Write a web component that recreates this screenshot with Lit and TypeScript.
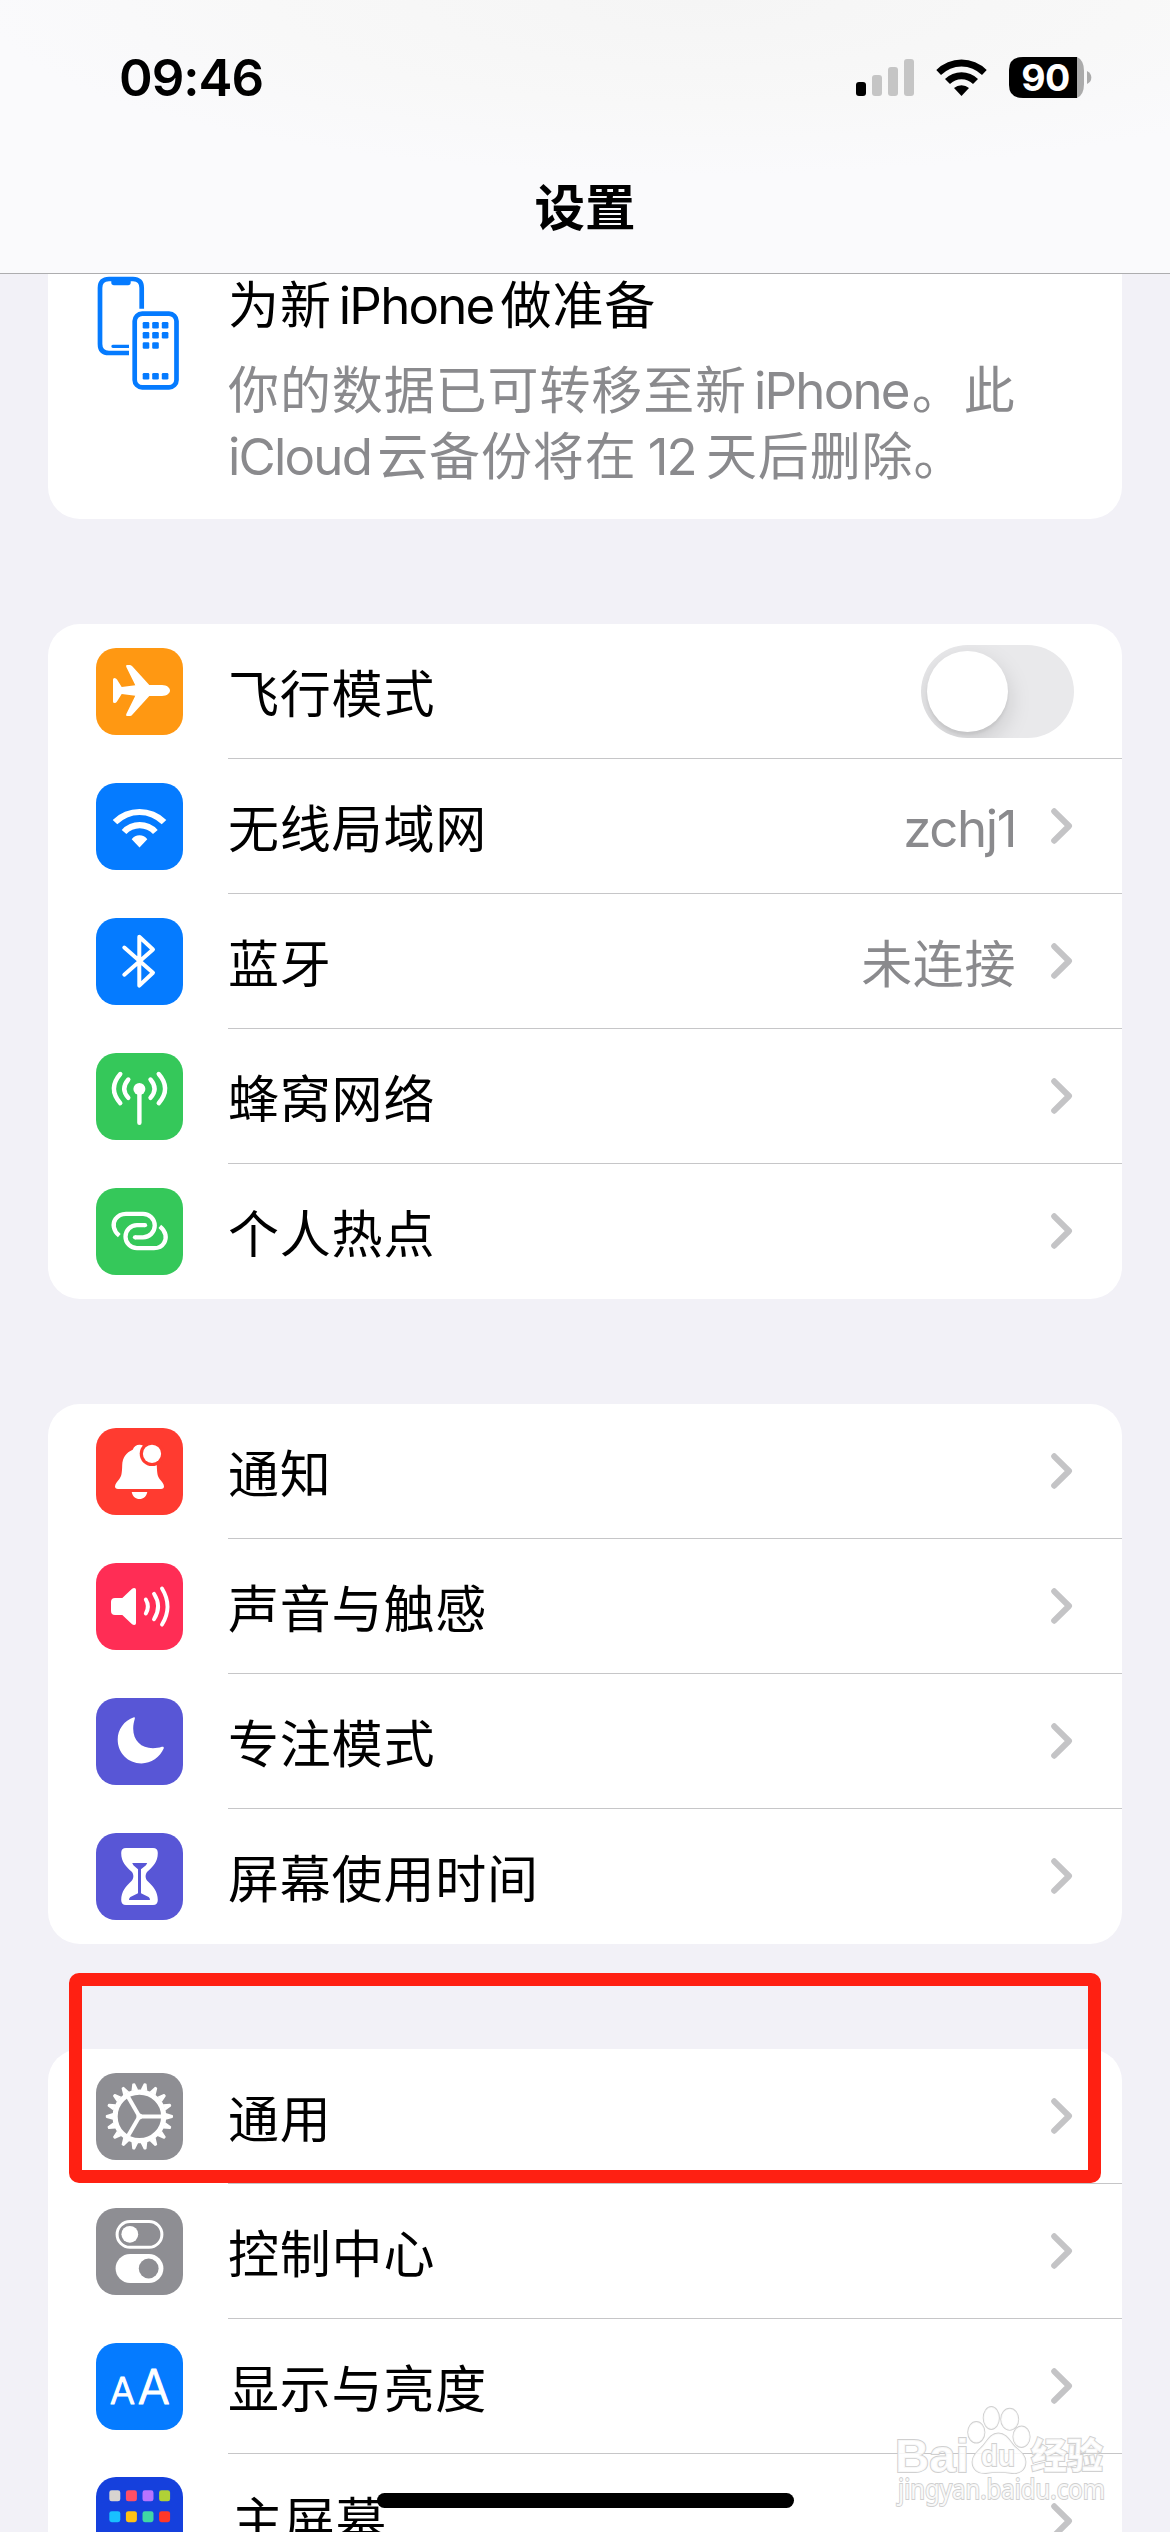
import { LitElement, html, css, svg, nothing } from "lit";
import { customElement, property } from "lit/decorators.js";

const gearTeeth = Array.from({ length: 18 }, (_, i) => i * 20);
const homeTiles = [
  ["#d8d4d0", "#ff4f66", "#b873ff", "#b0d136"],
  ["#18c0ff", "#ffc114", "#3fd8a4", "#ff3728"],
];

const glyphs: Record<string, unknown> = {
  airplane: svg`<path fill="#fff" d="M53.3 37H66C71 37 74 40 74 42.5C74 45 71 48 66 48H53.3L36.5 66.5Q35.3 68 34 68H31Q29.5 68 30.3 66L39.3 47.7L25.7 46L21 53.5Q20 55 18.5 55Q17 55 17 53.5V31.5Q17 30 18.5 30Q20 30 21 31.5L25.7 39L39.3 37.3L30.3 19Q29.5 17 31 17H34Q35.3 17 36.5 18.5Z"/>`,
  wifi: svg`<path fill="#fff" d="M16.7 37A38 38 0 0 1 70.3 37L65.7 41.3A31.1 31.1 0 0 0 21.3 41.3ZM25.7 47A24.3 24.3 0 0 1 61.7 47L57 51A18 18 0 0 0 30.4 51ZM35.7 56.3A9.6 9.6 0 0 1 51.3 56.3L43.5 64.4Z"/>`,
  bluetooth: svg`<path class="line" stroke-width="4" d="M28.3 29.5L57 54.7L43.3 67.6V18.8L57 31.5L28.3 56.7"/>`,
  cellular: svg`<circle cx="43.4" cy="36" r="6" fill="#fff"/><path class="line" stroke-width="4.4" d="M43.4 36V69.8M32.3 26.5Q24.2 36 32.3 44.8M54.5 26.5Q62.6 36 54.5 44.8M24.3 21Q11.5 35.5 24.3 50.2M62.7 21Q75.5 35.5 62.7 50.2"/>`,
  hotspot: svg`<path class="line butt" stroke-width="4.3" d="M23.3 47.7C17 42.5 16.3 35.5 19.5 31C22 27.5 26 25.8 30 25.8H47A11.75 11.75 0 0 1 47 49.3H39"/><path class="line butt" stroke-width="4.3" d="M49 37.2H41A11.5 11.5 0 0 0 41 60.2H58C62 60.2 66 58.4 68 55C71 50.2 70.3 43.5 63.8 38.4"/><circle cx="39" cy="49.3" r="2.15" fill="#fff"/><circle cx="49" cy="37.2" r="2.15" fill="#fff"/>`,
  bell: svg`<path fill="#fff" d="M36.7 21.7C38 18.5 40.5 16.8 43.5 16.8C46.5 16.8 49 18.5 50.3 21.7C57 24.5 60.5 30 60.8 37C61 45 61.5 48.5 64 51.5C66 54 68 56 68 58.5C68 60 67 61 65 61H22C20 61 19 60 19 58.5C19 56 21 54 23 51.5C25.5 48.5 26 45 26.2 37C26.5 30 30 24.5 36.7 21.7ZM35.7 64H51.3C50.5 68.5 47.3 71 43.5 71S36.5 68.5 35.7 64Z"/><circle cx="56" cy="25.8" r="12.3" fill="#ff3b30"/><circle cx="56" cy="25.8" r="9.1" fill="#fff"/>`,
  speaker: svg`<path fill="#fff" d="M19 35H26.3L35.8 26Q37 25 38.3 25Q40 25 40 26.8V60.2Q40 62 38.3 62Q37 62 35.8 61L26.3 52H19Q15 52 15 48V39Q15 35 19 35Z"/><path class="line" stroke-width="3.9" d="M49.8 36.5Q54 43.5 49.8 50.5M58 30.8Q66.2 43.5 58 56.3M66 25.5Q77 43.5 66 61.6"/>`,
  moon: svg`<path fill="#fff" d="M38 19.2C28 22.5 21.7 31.5 21.7 41.5C21.7 55 32 65.4 45.5 65.4C55 65.4 64 59 67.7 50.5C68.2 49 67.2 48.4 65.8 48.8C63 49.8 60 50.2 57 50.2C45 50.2 37.2 42.5 37.2 30.5C37.2 27 38 23.5 38.8 20.8Q39.3 18.8 38 19.2Z"/>`,
  hourglass: svg`<path fill="#fff" d="M30 15H57Q61.8 15 61.8 20C61.8 29 57 33.5 51.5 38.5C49 41 49 45.5 51.5 48C57 53 61.8 58.5 61.8 67Q61.8 72 57 72H30Q25.2 72 25.2 67C25.2 58.5 30 53 35.5 48C38 45.5 38 41 35.5 38.5C30 33.5 25.2 29 25.2 20Q25.2 15 30 15Z"/><path fill="#5856d6" d="M36.2 30H51.2L50 32.2Q47 34.5 45 36.3V60.2L52.6 64Q54 64.8 54 67H33Q33 64.8 34.4 64L42 60.2V36.3Q40 34.5 37.4 32.2Z"/>`,
  gear: svg`${gearTeeth.map(a => svg`<path fill="#fff" transform="rotate(${a + 90} 43.4 43.4)" d="M40 17L41.9 10.5Q42.1 9.8 42.8 9.8H44Q44.7 9.8 44.9 10.5L46.8 17Z"/>`)}<circle cx="43.4" cy="43.4" r="24.3" fill="none" stroke="#fff" stroke-width="5.2"/>${[0, 120, 240].map(a => svg`<path stroke="#fff" stroke-width="4" transform="rotate(${a} 43.4 43.4)" d="M43.4 43.4H67"/>`)}<circle cx="43.4" cy="43.4" r="3" fill="#fff"/>`,
  toggles: svg`<rect x="21.1" y="13.5" width="44.8" height="25.8" rx="12.9" fill="none" stroke="#fff" stroke-width="3"/><circle cx="33.8" cy="26.3" r="8.4" fill="#fff"/><rect x="19.6" y="46" width="47.8" height="28.9" rx="14.45" fill="#fff"/><circle cx="52.7" cy="60.5" r="9.9" fill="#8e8e93"/>`,
  letters: svg`<text class="glyph" x="14" y="61" font-size="37">A</text><text class="glyph" x="41.8" y="61" font-size="47.5">A</text>`,
  home: svg`${homeTiles.map((row, r) => row.map((c, i) => svg`<rect x="${13.3 + i * 16.6}" y="${13.3 + r * 20.9}" width="11" height="11" rx="2.4" fill="${c}"/>`))}`,
};

@customElement("settings-row")
class SettingsRow extends LitElement {
  @property() icon = "";
  @property() color = "";
  @property() label = "";
  @property() value = "";
  @property({ type: Boolean }) toggle = false;
  @property({ type: Boolean }) last = false;

  static styles = css`
    :host { display: block; height: 135px; }
    .row { display: flex; height: 135px; padding-left: 48px; }
    .icon { width: 87px; height: 87px; margin: 24px 45px 0 0; border-radius: 20px; flex: none; overflow: hidden; }
    .icon.home { margin-top: 23px; }
    .icon svg { display: block; width: 87px; height: 87px; }
    .line { fill: none; stroke: #fff; stroke-linecap: round; stroke-linejoin: round; }
    .butt { stroke-linecap: butt; }
    .glyph { font-family: Inter, "Liberation Sans", sans-serif; font-weight: 300; fill: #fff; stroke: #fff; stroke-width: 1.2; stroke-linejoin: round; }
    .body { flex: 1; display: flex; align-items: center; border-bottom: 1px solid #c6c6c8; padding-right: 48px; box-sizing: border-box; height: 135px; }
    .body.last { border-bottom-color: transparent; }
    .label, .value { line-height: 74px; font-size: 51px; letter-spacing: 0.8px; white-space: nowrap; padding-top: 7px; }
    .label { flex: 1; color: #000; }
    .label.home { padding: 2px 0 0 4px; }
    .value { color: #8a8a8d; letter-spacing: 0.6px; }
    .value.latin { letter-spacing: -1.4px; padding-top: 6px; }
    .chevron { width: 24px; height: 40px; margin-left: 34px; display: block; }
    .switch { width: 153px; height: 93px; border-radius: 47px; background: #e9e9eb; box-sizing: border-box; padding: 6px; overflow: hidden; }
    .knob { width: 81px; height: 81px; border-radius: 50%; background: #fff; box-shadow: 0 9px 24px rgba(0,0,0,.15), 0 3px 3px rgba(0,0,0,.06); }
  `;

  render() {
    const home = this.icon === "home" ? "home" : "";
    const latin = /^[\x20-\x7e]+$/.test(this.value) ? "latin" : "";
    return html`<div class="row">
      <div class="icon ${home}" style="background:${this.color}"><svg viewBox="0 0 87 87">${glyphs[this.icon]}</svg></div>
      <div class="body ${this.last ? "last" : ""}">
        <span class="label ${home}">${this.label}</span>
        ${this.value ? html`<span class="value ${latin}">${this.value}</span>` : nothing}
        ${this.toggle
          ? html`<div class="switch"><div class="knob"></div></div>`
          : html`<svg class="chevron" viewBox="0 0 24 40"><path d="M4.2 5.3L19 20L4.2 34.7" fill="none" stroke="#c4c4c6" stroke-width="6" stroke-linecap="round" stroke-linejoin="round"/></svg>`}
      </div>
    </div>`;
  }
}

interface Item { icon: string; color: string; label: string; value?: string; toggle?: boolean; }

const groups: Item[][] = [
  [
    { icon: "airplane", color: "#ff9812", label: "飞行模式", toggle: true },
    { icon: "wifi", color: "#057bff", label: "无线局域网", value: "zchj1" },
    { icon: "bluetooth", color: "#057bff", label: "蓝牙", value: "未连接" },
    { icon: "cellular", color: "#35c85a", label: "蜂窝网络" },
    { icon: "hotspot", color: "#35c85a", label: "个人热点" },
  ],
  [
    { icon: "bell", color: "#ff3b30", label: "通知" },
    { icon: "speaker", color: "#ff2d55", label: "声音与触感" },
    { icon: "moon", color: "#5856d6", label: "专注模式" },
    { icon: "hourglass", color: "#5856d6", label: "屏幕使用时间" },
  ],
  [
    { icon: "gear", color: "#8e8e93", label: "通用" },
    { icon: "toggles", color: "#8e8e93", label: "控制中心" },
    { icon: "letters", color: "#057bff", label: "显示与亮度" },
    { icon: "home", color: "#1540dd", label: "主屏幕" },
  ],
];

const dots = [[46.7, 47], [56.2, 47], [65.8, 47], [46.7, 57], [56.2, 57], [65.8, 57], [46.7, 67.2], [56.2, 67.2], [46.7, 98], [56.2, 98], [65.8, 98]];

@customElement("app-root")
class AppRoot extends LitElement {
  static styles = css`
    :host { display: block; width: 1170px; height: 2532px; overflow: hidden; position: relative; background: #f2f1f7; font-family: Inter, "Noto Sans CJK SC", sans-serif; }
    .page { display: flex; flex-direction: column; }
    .header { height: 274px; flex: none; box-sizing: border-box; border-bottom: 1px solid #adadaf; background: radial-gradient(ellipse 720px 175px at 700px 0, #f5f5f5, #f8f8f8 60%, rgba(250,250,252,0)), #fafafc; display: flex; flex-direction: column; }
    .status { height: 154px; display: flex; align-items: center; padding: 0 76px 0 119px; box-sizing: border-box; }
    .time { flex: 1; font-size: 51px; font-weight: 600; line-height: 60px; letter-spacing: -1px; padding-top: 1px; }
    .status-icons { width: 240px; height: 44px; display: block; }
    .battery { font-family: Inter, sans-serif; font-weight: 700; font-size: 37.5px; letter-spacing: -0.6px; fill: #fff; }
    .title { text-align: center; font-size: 50.5px; font-weight: 600; line-height: 72px; margin-top: 18px; color: #000; }
    .notice { background: #fff; margin: 0 48px; height: 245px; border-radius: 0 0 32px 32px; padding-left: 48px; display: flex; box-sizing: border-box; }
    .phones { width: 87px; height: 118px; margin: 1px 45px 0 0; flex: none; }
    .notice-text { font-size: 51px; line-height: 66px; letter-spacing: 0.9px; white-space: nowrap; color: #8a8a8d; }
    .notice-title { color: #000; line-height: 72px; margin: -4px 0 16px; }
    .latin { margin: 0 3px 0 7px; letter-spacing: -1.8px; }
    .notice-title .latin { margin-right: 7px; }
    .first { margin: 0 6px 0 0; }
    .digits { margin: 0 10px 0 11px; }
    .card { background: #fff; border-radius: 32px; margin: 105px 48px 0; }
    .marker { position: absolute; left: 69px; top: 1973px; width: 1032px; height: 210px; box-sizing: border-box; border: 13px solid #ff2012; border-radius: 10px; }
    .watermark { position: absolute; left: 890px; top: 2400px; width: 230px; height: 112px; fill: rgba(255,255,255,.85); stroke: #d0d0d0; stroke-width: 1.8; paint-order: stroke; }
    .wm-logo { font: 700 46px "Liberation Sans", sans-serif; }
    .wm-du { font: 700 30px "Liberation Sans", sans-serif; }
    .wm-cjk { font: 900 36px "Noto Sans CJK SC", sans-serif; }
    .wm-url { font: 400 26.5px "Noto Sans", sans-serif; }
    .indicator { position: absolute; left: 377px; top: 2493px; width: 417px; height: 15px; border-radius: 8px; background: #000; }
  `;

  render() {
    return html`
      <div class="page">
        <div class="header">
          <div class="status">
            <span class="time">09:46</span>
            <svg class="status-icons" viewBox="854 55 240 44">
              <rect x="856" y="82" width="10" height="14" rx="3"/>
              <g fill="#c5c5c5"><rect x="872" y="75" width="10" height="21" rx="3"/><rect x="888" y="67" width="10" height="29" rx="3"/><rect x="904" y="59" width="10" height="37" rx="3"/></g>
              <path d="M936.3 70A35.6 35.6 0 0 1 986.7 70L982 75A29 29 0 0 0 941 75ZM945 79A23.6 23.6 0 0 1 978 79L973 84A16.4 16.4 0 0 0 950 84ZM954 88A11.3 11.3 0 0 1 969 88L961.5 96Z"/>
              <path d="M1077 57Q1084 60 1084 71V84Q1084 95 1077 98Z" fill="#ababab"/>
              <path d="M1077 57H1023Q1009 57 1009 70V85Q1009 98 1023 98H1077Z"/>
              <path d="M1087 71Q1091.3 73 1091.3 77.5Q1091.3 82 1087 84Z" fill="#ababab"/>
              <text class="battery" x="1045.5" y="91" text-anchor="middle">90</text>
            </svg>
          </div>
          <div class="title">设置</div>
        </div>
        <div class="notice">
          <svg class="phones" viewBox="0 0 87 118">
            <g fill="none" stroke="#057bff" stroke-width="4.7">
              <path d="M45.7 33.7V13Q45.7 4 37 4H13Q4 4 4 13V69Q4 78 13 78H33"/>
              <rect x="38.7" y="38.6" width="41.8" height="73.8" rx="7.5"/>
            </g>
            <g fill="#057bff"><path d="M15.3 4H34.7V7.5Q34.7 10.3 32 10.3H18Q15.3 10.3 15.3 7.5Z"/><path d="M17 69.7H33V73H17Q15.3 73 15.3 71.3T17 69.7Z"/>
              ${dots.map(([x, y]) => svg`<rect x="${x}" y="${y}" width="6.6" height="6.6" rx="1.3"/>`)}</g>
          </svg>
          <div class="notice-text">
            <div class="notice-title">为新<span class="latin">iPhone</span>做准备</div>
            <div>你的数据已可转移至新<span class="latin">iPhone</span>。此</div>
            <div><span class="latin first">iCloud</span>云备份将在<span class="latin digits">12</span>天后删除。</div>
          </div>
        </div>
        ${groups.map(g => html`<div class="card">${g.map((it, i) => html`<settings-row
          .icon=${it.icon} .color=${it.color} .label=${it.label} .value=${it.value ?? ""}
          .toggle=${!!it.toggle} .last=${i === g.length - 1}></settings-row>`)}</div>`)}
      </div>
      <div class="marker"></div>
      <svg class="watermark" viewBox="890 2400 230 112">
        <text class="wm-logo" x="895" y="2471.5" textLength="74" lengthAdjust="spacingAndGlyphs">Bai</text>
        <ellipse cx="976.3" cy="2432.3" rx="8.2" ry="10.3"/><ellipse cx="991.3" cy="2418" rx="7.7" ry="11"/>
        <ellipse cx="1009.7" cy="2419.3" rx="8.6" ry="10.6"/><ellipse cx="1021.5" cy="2436.7" rx="8.2" ry="10.3"/>
        <path d="M998.3 2433.5C1007 2433.5 1010 2442 1015 2447C1021 2452 1025.5 2456 1025.5 2462C1025.5 2470 1019 2474 1012 2473C1003 2471.5 994 2471.5 986 2473C978 2474 972.5 2469 972.5 2462C972.5 2456 977 2452 982 2447C987 2442 990 2433.5 998.3 2433.5Z"/>
        <text class="wm-du" x="981" y="2466" textLength="34" lengthAdjust="spacingAndGlyphs">du</text>
        <text class="wm-cjk" x="1031" y="2469">经验</text>
        <text class="wm-url" x="898" y="2498.5" textLength="207" lengthAdjust="spacingAndGlyphs">jingyan.baidu.com</text>
      </svg>
      <div class="indicator"></div>
    `;
  }
}
